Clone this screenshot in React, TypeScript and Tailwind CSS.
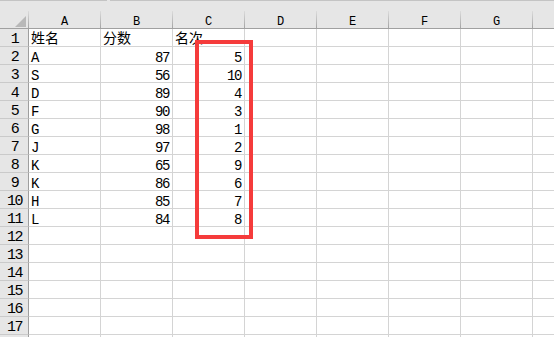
import React from "react";

const cols = ["A", "B", "C", "D", "E", "F", "G", ""];
const data: (string | number)[][] = [
  ["姓名", "分数", "名次"],
  ["A", 87, 5],
  ["S", 56, 10],
  ["D", 89, 4],
  ["F", 90, 3],
  ["G", 98, 1],
  ["J", 97, 2],
  ["K", 65, 9],
  ["K", 86, 6],
  ["H", 85, 7],
  ["L", 84, 8],
];

const mono = "font-['Liberation_Mono','Noto_Sans_CJK_SC',monospace]";

function Cell({ v }: { v: string | number | undefined }) {
  const isNum = typeof v === "number";
  const isCJK = typeof v === "string" && /[\u4e00-\u9fff]/.test(v);
  return (
    <div className="w-[72px] h-[18px] shrink-0 border-r border-b border-[#d4d4d4]">
      {v !== undefined && (
        <div
          className={
            "h-[17px] whitespace-nowrap text-black " +
            (isCJK
              ? "text-[14px] leading-[17px] pl-[2px] font-['Noto_Sans_CJK_SC',sans-serif]"
              : isNum
              ? `pt-[5px] leading-[12px] text-[14px] tracking-[-1.4px] text-right pr-[3px] ${mono}`
              : `pt-[5px] leading-[12px] text-[14px] pl-[2px] ${mono}`)
          }
        >
          {v}
        </div>
      )}
    </div>
  );
}

export default function App() {
  const rows = Array.from({ length: 18 }, (_, i) => i + 1);
  return (
    <div className="relative w-[554px] h-[337px] overflow-hidden bg-white">
      {/* column header */}
      <div className="h-[29px] bg-[#e6e6e6] border-b border-[#a0a0a0] flex flex-col">
        <div className="flex h-px shrink-0">
          <div className="w-[107px] bg-[#c4c4c4]" />
          <div className="w-[3px]" />
          <div className="flex-1 bg-[#c4c4c4]" />
        </div>
        <div className="flex h-[27px]">
          <div className="w-[29px] shrink-0 flex">
            <div className="w-[28px] h-full flex items-end justify-end pb-[1px] pr-[2px]">
              <svg width="11" height="11" viewBox="0 0 11 11">
                <polygon points="0,11 11,0 11,11" fill="#b8b8b8" />
              </svg>
            </div>
            <div className="w-px h-[17px] self-end bg-gradient-to-b from-[#dcdcdc] to-[#a4a4a4]" />
          </div>
          {cols.map((c, i) => (
            <div key={i} className="w-[72px] shrink-0 flex">
              <div
                className={`w-[71px] h-full flex flex-col justify-end ${mono}`}
              >
                <div className="h-[17px] pt-[5px] leading-[12px] text-[12px] text-center text-black">
                  {c}
                </div>
              </div>
              <div className="w-px h-[17px] self-end bg-gradient-to-b from-[#dcdcdc] to-[#a4a4a4]" />
            </div>
          ))}
        </div>
      </div>
      {/* rows */}
      {rows.map((r) => (
        <div key={r} className="flex h-[18px]">
          <div className="w-[29px] h-[18px] shrink-0 bg-[#e6e6e6] border-r border-b border-r-[#9e9e9e] border-b-[#cacaca]">
            {r <= 17 && (
              <div
                className={`h-[17px] pt-[5px] leading-[12px] text-[15px] tracking-[-1.5px] text-center text-black pl-[1px] ${mono}`}
              >
                {r}
              </div>
            )}
          </div>
          {cols.map((c, ci) => (
            <Cell key={ci} v={data[r - 1] ? data[r - 1][ci] : undefined} />
          ))}
        </div>
      ))}
      {/* highlight box */}
      <div className="absolute left-[195px] top-[40px] w-[58px] h-[199px] border-[4px] border-[#f53b3b]" />
    </div>
  );
}
